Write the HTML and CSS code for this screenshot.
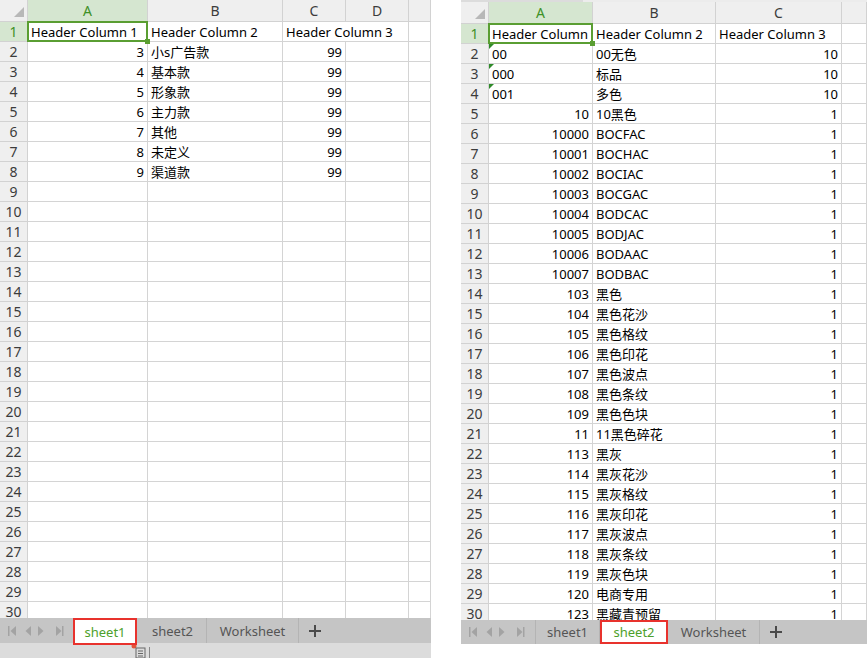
FILE: index.html
```html
<!DOCTYPE html>
<html lang="zh-CN">
<head>
  <meta charset="UTF-8" />
  <title>Sheets</title>
  <link rel="stylesheet" href="styles.css">
</head>
<body>

  <div class="app">
    <section class="book book-left">
      <div class="sheet" id="sheetLeft"></div>
      <div class="tabs">
        <div class="nav">
          <svg width="70" height="12" viewBox="0 0 70 12">
            <rect x="8" y="1" width="1.5" height="10" fill="#a3a3a3"/>
            <path d="M16 1 L10.5 6 L16 11 Z" fill="#a3a3a3"/>
            <path d="M31 1 L25.5 6 L31 11 Z" fill="#a3a3a3"/>
            <path d="M38 1 L43.5 6 L38 11 Z" fill="#a3a3a3"/>
            <path d="M56 1 L61.5 6 L56 11 Z" fill="#a3a3a3"/>
            <rect x="62" y="1" width="1.5" height="10" fill="#a3a3a3"/>
          </svg>
        </div>
        <div class="tab current">sheet1</div>
        <div class="tab">sheet2</div>
        <div class="tab wide">Worksheet</div>
        <div class="tab add">
          <svg width="14" height="14" viewBox="0 0 14 14">
            <path d="M7 1 V13 M1 7 H13" stroke="#4a4a4a" stroke-width="2"/>
          </svg>
        </div>
      </div>
      <div class="status">
        <svg class="status-icon" width="16" height="15" viewBox="0 0 16 15">
          <circle cx="3" cy="3" r="2.5" fill="#e2553b"/>
          <rect x="5" y="5" width="9" height="10" fill="none" stroke="#666" stroke-width="1"/>
          <path d="M7 8 H12 M7 10.5 H12 M7 13 H12" stroke="#666" stroke-width="1"/>
        </svg>
        <span class="status-line"></span>
      </div>
    </section>

    <section class="book book-right">
      <div class="topline"></div>
      <div class="sheet" id="sheetRight"></div>
      <div class="tabs">
        <div class="nav nav-sep">
          <svg width="70" height="12" viewBox="0 0 70 12">
            <rect x="8" y="1" width="1.5" height="10" fill="#a3a3a3"/>
            <path d="M16 1 L10.5 6 L16 11 Z" fill="#a3a3a3"/>
            <path d="M31 1 L25.5 6 L31 11 Z" fill="#a3a3a3"/>
            <path d="M38 1 L43.5 6 L38 11 Z" fill="#a3a3a3"/>
            <path d="M56 1 L61.5 6 L56 11 Z" fill="#a3a3a3"/>
            <rect x="62" y="1" width="1.5" height="10" fill="#a3a3a3"/>
          </svg>
        </div>
        <div class="tab">sheet1</div>
        <div class="tab current">sheet2</div>
        <div class="tab wide">Worksheet</div>
        <div class="tab add">
          <svg width="14" height="14" viewBox="0 0 14 14">
            <path d="M7 1 V13 M1 7 H13" stroke="#4a4a4a" stroke-width="2"/>
          </svg>
        </div>
      </div>
    </section>
  </div>

  <script>
    const books = [
      {
        id: "sheetLeft",
        cols: ["A", "B", "C", "D", ""],
        spans: { "0-2": 2 },
        flags: [],
        rows: [
          ["Header Column 1", "Header Column 2", "Header Column 3"],
          [3, "小s广告款", 99],
          [4, "基本款", 99],
          [5, "形象款", 99],
          [6, "主力款", 99],
          [7, "其他", 99],
          [8, "未定义", 99],
          [9, "渠道款", 99]
        ]
      },
      {
        id: "sheetRight",
        cols: ["A", "B", "C", ""],
        spans: {},
        flags: [1, 2, 3],
        rows: [
          ["Header Column 1", "Header Column 2", "Header Column 3"],
          ["00", "00无色", 10],
          ["000", "标品", 10],
          ["001", "多色", 10],
          [10, "10黑色", 1],
          [10000, "BOCFAC", 1],
          [10001, "BOCHAC", 1],
          [10002, "BOCIAC", 1],
          [10003, "BOCGAC", 1],
          [10004, "BODCAC", 1],
          [10005, "BODJAC", 1],
          [10006, "BODAAC", 1],
          [10007, "BODBAC", 1],
          [103, "黑色", 1],
          [104, "黑色花沙", 1],
          [105, "黑色格纹", 1],
          [106, "黑色印花", 1],
          [107, "黑色波点", 1],
          [108, "黑色条纹", 1],
          [109, "黑色色块", 1],
          [11, "11黑色碎花", 1],
          [113, "黑灰", 1],
          [114, "黑灰花沙", 1],
          [115, "黑灰格纹", 1],
          [116, "黑灰印花", 1],
          [117, "黑灰波点", 1],
          [118, "黑灰条纹", 1],
          [119, "黑灰色块", 1],
          [120, "电商专用", 1],
          [123, "黑藏青预留", 1]
        ]
      }
    ];

    function makeCell(cls, text) {
      const div = document.createElement("div");
      div.className = cls;
      const span = document.createElement("span");
      span.className = "txt";
      span.textContent = text;
      div.appendChild(span);
      return div;
    }

    books.forEach(book => {
      const sheet = document.getElementById(book.id);

      // header row
      sheet.appendChild(makeCell("cell hd corner", ""));
      book.cols.forEach((letter, c) => {
        sheet.appendChild(makeCell("cell hd col-hd" + (c === 0 ? " sel" : ""), letter));
      });

      for (let r = 0; r < 30; r++) {
        sheet.appendChild(makeCell("cell hd row-hd" + (r === 0 ? " sel" : ""), r + 1));
        const row = book.rows[r] || [];
        for (let c = 0; c < book.cols.length; c++) {
          const value = row[c] === undefined ? "" : row[c];
          let cls = "cell";
          if (typeof value === "number") cls += " num";
          if (r === 0 && c === 0) cls += " selected";
          if (c === 0 && book.flags.includes(r)) cls += " flag";
          const cell = makeCell(cls, value);
          const span = book.spans[r + "-" + c];
          if (span) {
            cell.style.gridColumn = "span " + span;
            c += span - 1;
          }
          sheet.appendChild(cell);
        }
      }
    });
  </script>

</body>
</html>
```

FILE: styles.css
```css
body {
  margin: 0;
  background: #fff;
  font-family: "Noto Sans", "Noto Sans CJK SC", sans-serif;
  font-size: 13px;
  color: #000;
}
.app {
  display: flex;
  gap: 30px;
  height: 658px;
  overflow: hidden;
}
.book {
  display: flex;
  flex-direction: column;
}
.book-left {
  width: 431px;
}
.book-right {
  width: 406px;
}
.topline {
  height: 2px;
  background: linear-gradient(to right, #dcdcdc 0, #dcdcdc 122px, #ececec 122px);
}
.sheet {
  display: grid;
  grid-template-rows: 22px;
  grid-auto-rows: 20px;
  align-content: start;
  height: 618px;
  overflow: hidden;
}
.book-left .sheet {
  grid-template-columns: 28px 120px 135px 63px 63px 22px;
}
.book-right .sheet {
  grid-template-columns: 28px 104px 123px 126px 25px;
}
.cell {
  box-sizing: border-box;
  border-right: 1px solid #d4d4d4;
  border-bottom: 1px solid #d4d4d4;
  padding: 0 3px;
  line-height: 20px;
  white-space: nowrap;
  overflow: hidden;
}
.txt {
  display: block;
  overflow: hidden;
}
.num {
  text-align: right;
}
.hd {
  background: #efefef;
  border-color: #d2d2d2;
  color: #3c3c3c;
  text-align: center;
  padding: 0;
}
.col-hd {
  font-size: 14px;
  line-height: 21px;
}
.row-hd {
  font-size: 14px;
}
.hd.sel {
  background: #d5e6d0;
  color: #3f9127;
}
.corner {
  position: relative;
}
.corner::after {
  content: "";
  position: absolute;
  right: 3px;
  bottom: 4px;
  border-bottom: 10px solid #b8b8b8;
  border-left: 10px solid transparent;
}
.selected {
  position: relative;
  z-index: 2;
  overflow: visible;
}
.selected::after {
  content: "";
  position: absolute;
  top: -1px;
  left: -1px;
  right: -1px;
  bottom: -1px;
  border: 2px solid #5a9e32;
}
.selected::before {
  content: "";
  position: absolute;
  right: -3px;
  bottom: -3px;
  width: 5px;
  height: 5px;
  background: #5a9e32;
  z-index: 1;
}
.flag {
  position: relative;
}
.flag::before {
  content: "";
  position: absolute;
  top: 0;
  left: 0;
  border-top: 5px solid #2f8a2a;
  border-right: 5px solid transparent;
}
.tabs {
  display: flex;
  align-items: stretch;
  height: 25px;
  background: #c5c5c5;
  color: #555;
}
.book-right .tabs {
  height: 24px;
}
.nav {
  width: 73px;
  display: flex;
  align-items: center;
}
.nav-sep {
  width: 74px;
  border-right: 1px solid #b4b4b4;
}
.tab {
  display: flex;
  align-items: center;
  justify-content: center;
  box-sizing: border-box;
  width: 68px;
  border-right: 1px solid #b4b4b4;
}
.book-right .tab {
  width: 64px;
}
.tab.wide,
.book-right .tab.wide {
  width: 92px;
}
.tab.add,
.book-right .tab.add {
  width: 31px;
  border-right: none;
}
.tab.current {
  position: relative;
  z-index: 1;
  width: 64px;
  margin-bottom: -2px;
  margin-right: 2px;
  background: #fff;
  border: 2px solid #e8322d;
  color: #4d9f2b;
}
.book-right .tab.current {
  width: 68px;
  margin: 0;
  height: 24px;
}
.status {
  flex: 1;
  display: flex;
  align-items: flex-end;
  background: #dcdcdc;
}
.status-icon {
  margin-left: 131px;
}
.status-line {
  width: 1px;
  height: 11px;
  margin-left: 2px;
  background: #888;
}
```
